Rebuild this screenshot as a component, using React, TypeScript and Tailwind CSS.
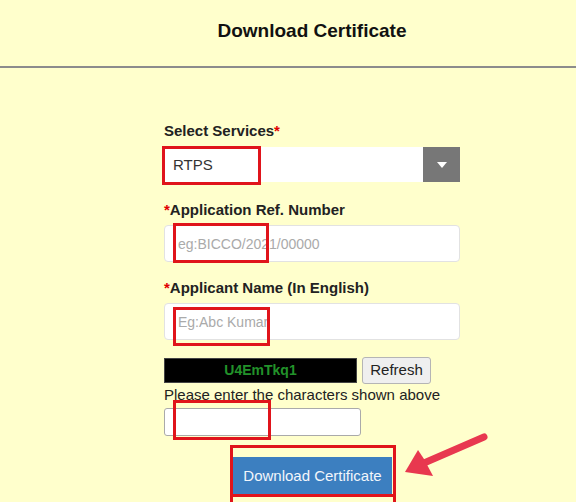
function RedBox({ className }: { className: string }) {
  return <div className={`pointer-events-none absolute border-[3px] border-[#e0141b] ${className}`} />;
}

export default function App() {
  return (
    <main className="relative h-[502px] w-full overflow-hidden bg-[#ffffcc] font-['Liberation_Sans',Arial,sans-serif] text-[#222]">
      {/* Page title */}
      <header className="flex h-[68px] justify-center border-b-2 border-[#8c8c8c] pl-[48px] pt-[20px]">
        <h1 className="text-[19px] font-bold leading-[22px] text-[#111]">Download Certificate</h1>
      </header>

      {/* Form */}
      <section className="ml-[164px] w-[296px] pt-[54px]">
        <label className="block text-[15px] font-bold leading-[18px]">
          Select Services<span className="text-[#e00000]">*</span>
        </label>
        <div className="relative mt-[7px] flex h-[35px] bg-white">
          <span className="flex-1 pl-[9px] text-[15px] leading-[35px] text-[#333]">RTPS</span>
          <span className="flex w-[37px] items-center justify-center bg-[#777]">
            <svg width="10" height="6" viewBox="0 0 10 6">
              <path d="M0 0h10L5 6z" fill="#fff" />
            </svg>
          </span>
          <RedBox className="-left-[2px] -top-[1px] h-[39px] w-[99px]" />
        </div>

        <label className="mt-[19px] block text-[15px] font-bold leading-[18px]">
          <span className="text-[#e00000]">*</span>Application Ref. Number
        </label>
        <div className="relative mt-[6px]">
          <input
            readOnly
            placeholder="eg:BICCO/2021/00000"
            className="h-[37px] w-full rounded-[4px] border border-[#e2e2e2] bg-white pl-[13px] text-[14px] outline-none placeholder:text-[#aaa]"
          />
          <RedBox className="left-[9px] -top-[2px] h-[40px] w-[96px]" />
        </div>

        <label className="mt-[17px] block text-[15px] font-bold leading-[18px]">
          <span className="text-[#e00000]">*</span>Applicant Name (In English)
        </label>
        <div className="relative mt-[6px]">
          <input
            readOnly
            placeholder="Eg:Abc Kumar"
            className="h-[37px] w-full rounded-[4px] border border-[#e2e2e2] bg-white pl-[13px] text-[14px] outline-none placeholder:text-[#aaa]"
          />
          <RedBox className="left-[9px] top-[4px] h-[39px] w-[97px]" />
        </div>

        {/* Captcha */}
        <div className="mt-[17px] flex h-[27px] items-center gap-[5px]">
          <div className="flex h-[25px] w-[193px] items-center justify-center border border-[#444] bg-black text-[14px] font-bold text-[#22922a]">
            U4EmTkq1
          </div>
          <button className="h-[27px] w-[69px] rounded-[3px] border border-[#b5b5b5] bg-[#efefef] text-[15px] text-[#222]">
            Refresh
          </button>
        </div>
        <p className="mt-[2px] text-[15px] leading-[18px] text-[#222]">Please enter the characters shown above</p>
        <div className="relative mt-[4px] w-[197px]">
          <input readOnly className="h-[28px] w-full rounded-[3px] border border-[#aaa] bg-white outline-none" />
          <RedBox className="left-[9px] -top-[8px] h-[40px] w-[98px]" />
        </div>

        <div className="relative ml-[69px] mt-[21px] w-[159px]">
          <button className="h-[39px] w-full bg-[#3c7fc0] text-[15px] text-[#f2f6fb]">Download Certificate</button>
          <RedBox className="-left-[3px] -top-[12px] h-[52px] w-[166px]" />
          <RedBox className="-left-[3px] top-[37px] h-[40px] w-[166px]" />
        </div>
      </section>

      {/* Annotation arrow */}
      <svg className="pointer-events-none absolute left-[400px] top-[430px]" width="90" height="50" viewBox="0 0 90 50">
        <line x1="84" y1="7" x2="24" y2="33" stroke="#e8384f" strokeWidth="7" strokeLinecap="round" />
        <path d="M5 42 L18 20 L24 29 L33 46 Z" fill="#e8384f" />
      </svg>
    </main>
  );
}
